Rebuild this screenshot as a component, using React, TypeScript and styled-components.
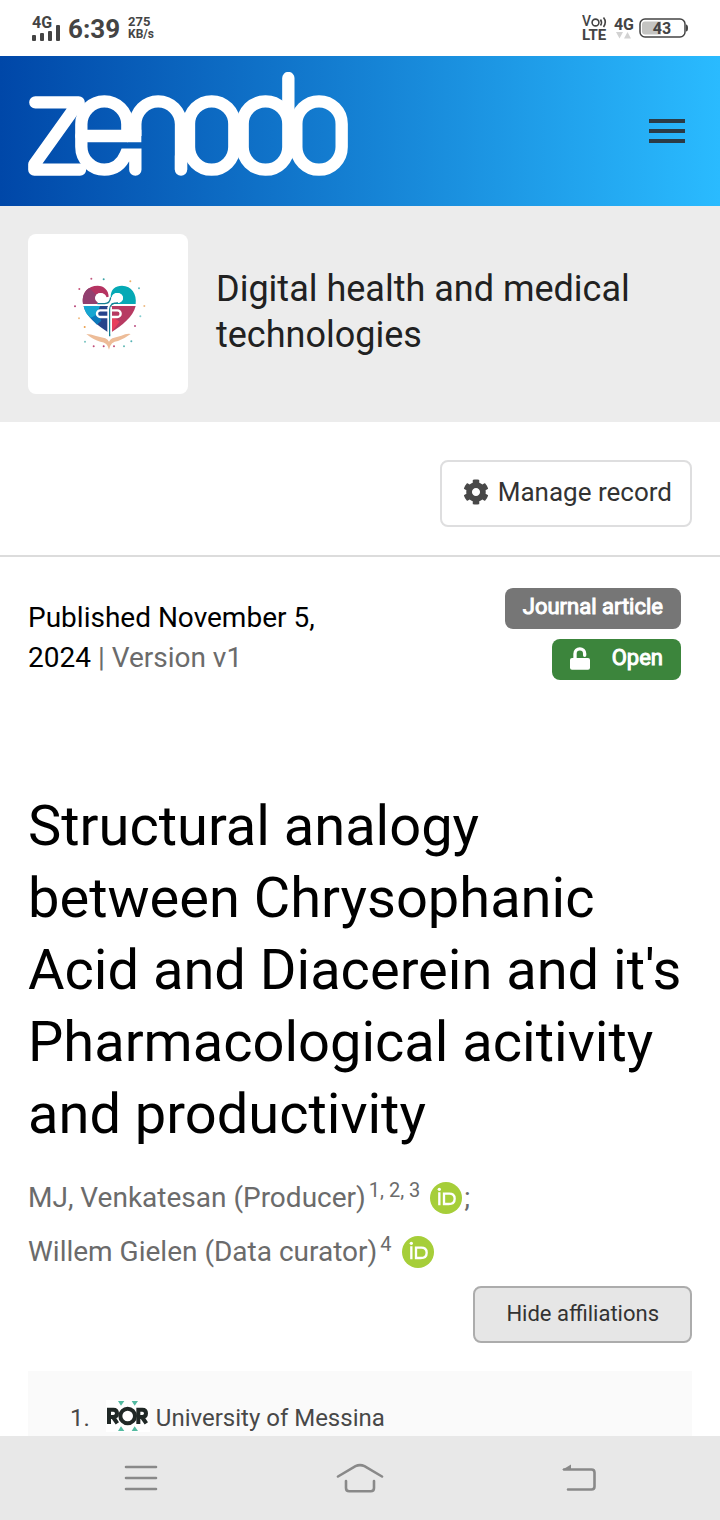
import React from "react";
import styled, { createGlobalStyle } from "styled-components";
import { FaCog } from "react-icons/fa";

const GlobalStyle = createGlobalStyle`
  *, *::before, *::after { box-sizing: border-box; }
  body { margin: 0; background: #fff; font-family: Roboto, "Liberation Sans", sans-serif; color: #000; }
  button { font-family: inherit; cursor: pointer; }
`;

const Screen = styled.div`
  display: flex;
  flex-direction: column;
  height: 100vh;
`;

const StatusBar = styled.div`
  display: flex;
  flex: none;
  align-items: center;
  justify-content: space-between;
  height: 56px;
  padding: 0 32px;
  color: #444;
  font-weight: 700;
`;

const StatusGroup = styled.div<{ $gap: number }>`
  display: flex;
  align-items: center;
  gap: ${(p) => p.$gap}px;
`;

const StatusStack = styled.div`
  display: flex;
  flex-direction: column;
  line-height: 13px;
`;

const StatusText = styled.span<{ $size: number }>`
  font-size: ${(p) => p.$size}px;
`;

const SignalStack = styled.div`
  display: grid;
  width: 28px;
  line-height: 13px;
  > * { grid-area: 1 / 1; }
  svg { margin-top: 8px; }
`;

const Clock = styled.time`
  padding-top: 2px;
  font-size: 26px;
  line-height: 32px;
`;

const Page = styled.div`
  flex: 1;
  min-height: 0;
  overflow: hidden;
`;

const Header = styled.header`
  display: flex;
  align-items: center;
  justify-content: space-between;
  height: 150px;
  padding: 0 28px;
  background: linear-gradient(90deg, #0047a8, #2abbff);
`;

const LogoLink = styled.a`
  display: flex;
  margin-bottom: 14px;
`;

const PlainButton = styled.button`
  display: flex;
  align-items: center;
  justify-content: center;
  padding: 6px;
  border: 0;
  background: transparent;
`;

const Community = styled.section`
  display: flex;
  align-items: center;
  gap: 28px;
  padding: 28px;
  background: #ececec;
`;

const CommunityLogo = styled.div`
  flex: none;
  width: 160px;
  height: 160px;
  border-radius: 8px;
  background: #fff;
`;

const CommunityName = styled.h2`
  margin: 0;
  padding-bottom: 4px;
  color: #212121;
  font-size: 36px;
  font-weight: 400;
  line-height: 46px;
`;

const ManageBar = styled.div`
  display: flex;
  justify-content: flex-end;
  padding: 38px 28px 28px;
  border-bottom: 2px solid #dcdcdc;
`;

const ManageButton = styled.button`
  display: flex;
  align-items: center;
  gap: 9px;
  height: 67px;
  padding: 0 18px 4px 21px;
  border: 2px solid #dededf;
  border-radius: 8px;
  background: #fff;
  color: #333;
  font-size: 26px;
  svg { color: #484848; }
`;

const Record = styled.main`
  padding: 31px 28px 0;
`;

const Meta = styled.div`
  display: flex;
  align-items: flex-start;
  justify-content: space-between;
  padding-right: 11px;
`;

const Published = styled.p`
  width: 300px;
  margin: 10px 0 0;
  font-size: 28px;
  line-height: 40px;
`;

const Muted = styled.span`
  color: #6b6b6b;
`;

const Labels = styled.div`
  display: flex;
  flex-direction: column;
  align-items: flex-end;
  gap: 10px;
`;

const Label = styled.span<{ $color: string }>`
  display: flex;
  align-items: center;
  gap: 22px;
  height: 41px;
  padding: 0 18px 4px;
  border-radius: 8px;
  background: ${(p) => p.$color};
  color: #fff;
  font-size: 22px;
  -webkit-text-stroke: 1px #fff;
  svg { margin-top: 2px; }
`;

const Title = styled.h1`
  margin: 110px 0 0;
  font-size: 56px;
  font-weight: 400;
  line-height: 72px;
`;

const Creators = styled.ul`
  margin: 21px 0 0;
  padding: 0;
  list-style: none;
`;

const Creator = styled.li`
  display: flex;
  align-items: center;
  height: 54px;
  padding-bottom: 2px;
  color: #6b6b6b;
  font-size: 28px;
  sup {
    align-self: flex-start;
    margin: 7px 10px 0 3px;
    font-size: 20px;
    line-height: 24px;
  }
`;

const OrcidLink = styled.a`
  display: flex;
  margin: 2px 2px 0 0;
`;

const Actions = styled.div`
  display: flex;
  justify-content: flex-end;
  margin-top: 7px;
`;

const HideButton = styled.button`
  height: 57px;
  padding: 0 31px 2px;
  border: 2px solid #acacac;
  border-radius: 8px;
  background: #e6e6e6;
  color: #333;
  font-size: 22px;
`;

const Affiliations = styled.ol`
  margin: 28px 0 0;
  padding: 28px 42px;
  background: #fafafa;
  list-style: none;
`;

const Affiliation = styled.li`
  display: flex;
  align-items: center;
  height: 38px;
  color: #484848;
  font-size: 24px;
`;

const RorLink = styled.a`
  display: flex;
  margin: 0 6px 4px 16px;
`;

const NavBar = styled.nav`
  display: grid;
  grid-template-columns: repeat(3, 1fr);
  flex: none;
  height: 84px;
  padding: 0 31px;
  background: #e8e8e8;
`;

function Signal() {
  return (
    <svg width="28" height="17" viewBox="0 0 28 17" fill="#444" aria-hidden="true">
      <rect x="0" y="11" width="4" height="6" rx="1" />
      <rect x="8" y="9" width="4" height="8" rx="1" />
      <rect x="16" y="7" width="4" height="10" rx="1" />
      <rect x="24" y="1" width="4" height="16" rx="1" />
    </svg>
  );
}

function VoLte() {
  return (
    <svg width="27" height="28" viewBox="0 0 27 28" aria-label="VoLTE" role="img">
      <g fill="#444" fontFamily="Roboto, sans-serif">
        <text x="0" y="12" fontSize="14" fontWeight="500">V</text>
        <text x="0" y="26" fontSize="15" fontWeight="700">LTE</text>
      </g>
      <g fill="none" stroke="#444" strokeWidth="1.6">
        <circle cx="13.5" cy="8.5" r="3.4" />
        <path d="M18.5 5.5q2 3 0 6M21.5 3.5q3.600 4.500 0 9.500" />
      </g>
    </svg>
  );
}

function DataArrows() {
  return (
    <svg width="18" height="8" viewBox="0 0 18 8" fill="#d2d2d2" aria-hidden="true">
      <path d="M2 1h7L5.500 7.500zM10 7.500h7L13.500 1z" />
    </svg>
  );
}

function Battery() {
  return (
    <svg width="49" height="20" viewBox="0 0 49 20" aria-label="Battery 43%" role="img">
      <rect x="1" y="1" width="45" height="18" rx="5" fill="#fff" stroke="#444" strokeWidth="1.500" />
      <path d="M6 3.500h16v13H6a3 3 0 0 1-3-3v-7a3 3 0 0 1 3-3z" fill="#c4c4c2" />
      <path d="M47 6.500q2 0 2 3.500t-2 3.500z" fill="#444" />
      <text x="23" y="16" textAnchor="middle" fontFamily="Roboto, sans-serif" fontSize="16" fontWeight="700" fill="#444">43</text>
    </svg>
  );
}

function ZenodoLogo() {
  return (
    <svg width="320" height="104" viewBox="84 48 960 312" aria-label="Zenodo" role="img">
      <g fill="none" stroke="#fff" strokeWidth="37" strokeLinecap="round" strokeLinejoin="round">
        <path d="M106 139H236L103 325V341H240" />
        <path d="M244 240V205A69 69 0 0 1 382 205V240" />
        <path d="M244 240H424" strokeLinecap="butt" />
        <path d="M244 240V272A69 69 0 0 0 313 341Q358 341 377 296H406V341" strokeLinejoin="miter" />
        <path d="M406 240V205A68.500 69 0 0 1 543 205V341" strokeLinecap="butt" />
        <path d="M543 300V341" />
        <rect x="567" y="136" width="136" height="205" rx="68" />
        <rect x="728" y="136" width="137" height="205" rx="68" />
        <path d="M865 66V190" />
        <rect x="889" y="136" width="136" height="205" rx="68" />
      </g>
    </svg>
  );
}

const confetti: [number, number, string][] = [
  [190, 134, "#c25a80"], [227, 136, "#3aa3a6"], [307, 142, "#edb06c"], [333, 163, "#62bdc0"],
  [154, 165, "#c7547c"], [141, 217, "#b84579"], [349, 216, "#edbb85"], [153, 253, "#f0bd86"],
  [337, 247, "#83cdd0"], [170, 279, "#eba04c"], [321, 276, "#bd4f83"], [171, 323, "#78c4c1"],
  [310, 322, "#56b3b5"], [197, 337, "#c14c79"], [227, 337, "#b94274"], [258, 337, "#c14c79"],
  [288, 337, "#63b9b5"],
];

function HeartLogo() {
  return (
    <svg width="160" height="160" viewBox="0 0 480 480" aria-hidden="true">
      {confetti.map(([x, y, fill]) => (
        <circle key={`${x}-${y}`} cx={x} cy={y} r="3" fill={fill} />
      ))}
      <path d="M165 210C160 174 181 155 209 155C228 155 242 169 242 188L236 190C230 177 216 175 208 180C197 187 200 204 216 207L240 210Z" fill="#b53361" />
      <path d="M165 210C161 187 171 168 184 162L206 184C198 194 205 204 216 207L240 210Z" fill="#91406f" />
      <path d="M248 188C248 166 262 155 282 155C311 155 327 180 323 210H249Q252 205 270 207C289 205 290 183 273 178C263 174 254 180 251 190Z" fill="#05a9b5" />
      <path d="M167 216H240V295C209 273 174 249 167 216Z" fill="#27448b" />
      <path d="M167 216H216L203 250L188 252Q170 237 167 216Z" fill="#16a6d1" />
      <path d="M188 252L210 239L220 260L207 272Z" fill="#0c79bb" />
      <path d="M250 216H323C315 249 283 273 250 295Z" fill="#b73a62" />
      <path d="M250 246L275 263L250 295Z" fill="#e83e5d" />
      <ellipse cx="218" cy="192" rx="17" ry="15" fill="#fff" />
      <ellipse cx="268" cy="192" rx="17" ry="15" fill="#fff" />
      <path d="M240 229H217a10 10 0 0 0 0 20H268a10 10 0 0 0 0-20H240" fill="none" stroke="#fff" strokeWidth="7" />
      <path d="M209 207H232Q244 206 246 192" fill="none" stroke="#fff" strokeWidth="8" />
      <path d="M208 209H230Q246 208 248 190M270 207Q245 206 245 226V307" fill="none" stroke="#147f93" strokeWidth="4" />
      <path d="M240 218V300M250 218V300" fill="none" stroke="#fff" strokeWidth="4" />
      <path d="M175 300Q188 300 204 306L232 313Q240 317 243 323Q247 316 253 313L280 305Q295 298 308 300Q291 313 270 321Q248 322 243 347Q239 324 217 323Q197 318 175 300Z" fill="#edbc98" />
    </svg>
  );
}

function OpenLock() {
  return (
    <svg width="20" height="23" viewBox="0 0 60 69" aria-hidden="true">
      <rect x="0" y="33" width="60" height="35" rx="6" fill="#fff" />
      <path d="M15 36V20a14.500 14.500 0 0 1 29 0V25" fill="none" stroke="#fff" strokeWidth="10" strokeLinecap="round" />
    </svg>
  );
}

function Orcid() {
  return (
    <svg width="32" height="32" viewBox="0 0 96 96" aria-label="ORCID" role="img">
      <circle cx="48" cy="48" r="48" fill="#a6ce39" />
      <circle cx="28" cy="22" r="5" fill="#fff" />
      <path d="M28 31V70M42 35V66H56Q74 66 74 50T56 35Z" fill="none" stroke="#fff" strokeWidth="7" />
    </svg>
  );
}

function Ror() {
  return (
    <svg width="44" height="32" viewBox="0 0 132 96" aria-label="ROR" role="img">
      <rect width="132" height="96" fill="#fff" />
      <path d="M36 3H55L45 17ZM77 3H96L86 17ZM36 93H55L45 79ZM77 93H96L86 79Z" fill="#53baa1" />
      <g fill="none" stroke="#202826" strokeWidth="12">
        <path d="M9 72V29H22Q33 29 33 40T22 51H9M21 51L34 70" />
        <circle cx="65" cy="48" r="22" />
        <path d="M97 72V29H109Q120 29 120 40T109 51H97M108 51L121 70" />
      </g>
    </svg>
  );
}

export default function App() {
  return (
    <Screen>
      <GlobalStyle />
      <StatusBar>
        <StatusGroup $gap={8}>
          <SignalStack>
            <StatusText $size={16}>4G</StatusText>
            <Signal />
          </SignalStack>
          <Clock>6:39</Clock>
          <StatusStack>
            <StatusText $size={13}>275</StatusText>
            <StatusText $size={12}>KB/s</StatusText>
          </StatusStack>
        </StatusGroup>
        <StatusGroup $gap={5}>
          <VoLte />
          <StatusStack>
            <StatusText $size={16}>4G</StatusText>
            <DataArrows />
          </StatusStack>
          <Battery />
        </StatusGroup>
      </StatusBar>
      <Page>
        <Header>
          <LogoLink href="#home"><ZenodoLogo /></LogoLink>
          <PlainButton aria-label="Menu">
            <svg width="38" height="26" viewBox="0 0 38 26" aria-hidden="true">
              <path d="M1 3H37M1 13H37M1 23H37" stroke="#2b3b46" strokeWidth="4" />
            </svg>
          </PlainButton>
        </Header>
        <Community>
          <CommunityLogo><HeartLogo /></CommunityLogo>
          <CommunityName>Digital health and medical technologies</CommunityName>
        </Community>
        <ManageBar>
          <ManageButton><FaCog size={26} />Manage record</ManageButton>
        </ManageBar>
        <Record>
          <Meta>
            <Published>Published November 5, 2024 <Muted>| Version v1</Muted></Published>
            <Labels>
              <Label $color="#767676">Journal article</Label>
              <Label $color="#3c853c"><OpenLock />Open</Label>
            </Labels>
          </Meta>
          <Title>Structural analogy between Chrysophanic Acid and Diacerein and it's Pharmacological acitivity and productivity</Title>
          <Creators>
            <Creator>
              MJ, Venkatesan (Producer)<sup>1, 2, 3</sup><OrcidLink href="#orcid-1"><Orcid /></OrcidLink>;
            </Creator>
            <Creator>
              Willem Gielen (Data curator)<sup>4</sup><OrcidLink href="#orcid-2"><Orcid /></OrcidLink>
            </Creator>
          </Creators>
          <Actions><HideButton>Hide affiliations</HideButton></Actions>
          <Affiliations>
            <Affiliation>
              <span>1.</span><RorLink href="#ror"><Ror /></RorLink>University of Messina
            </Affiliation>
          </Affiliations>
        </Record>
      </Page>
      <NavBar>
        <PlainButton aria-label="Recent apps">
          <svg width="34" height="28" viewBox="0 0 34 28" fill="none" stroke="#898989" strokeWidth="2.600" strokeLinecap="round">
            <path d="M2 3H32M2 14H32M2 25H32" />
          </svg>
        </PlainButton>
        <PlainButton aria-label="Home">
          <svg width="48" height="30" viewBox="0 0 48 30" fill="none" stroke="#898989" strokeWidth="2.600" strokeLinecap="round">
            <path d="M2 13.500L19.500 3.200Q24 1 28.500 3.200L46 13.500M10 18V25Q10 28.300 13.300 28.300H34.700Q38 28.300 38 25V18" />
          </svg>
        </PlainButton>
        <PlainButton aria-label="Back">
          <svg width="36" height="28" viewBox="0 0 36 28" fill="none" stroke="#898989" strokeWidth="2.600" strokeLinecap="round">
            <path d="M3 5.500H30.500Q33.500 5.500 33.500 8.500V22.500Q33.500 25.500 30.500 25.500H7" />
            <path d="M1 6L10 .500V6Z" fill="#898989" stroke="none" />
          </svg>
        </PlainButton>
      </NavBar>
    </Screen>
  );
}
